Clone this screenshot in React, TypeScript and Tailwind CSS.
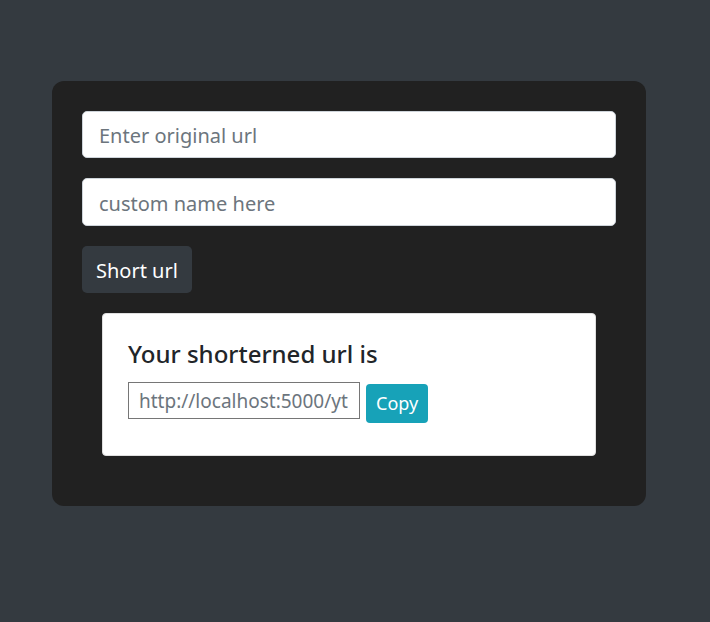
import React from "react";

export default function App() {
  return (
    <div className="min-h-[622px] w-full bg-[#343a40] pt-[81px]" style={{ fontFamily: '"Segoe UI", "Noto Sans", sans-serif' }}>
      <div className="ml-[52px] w-[594px] rounded-[12px] bg-[#212121] px-[30px] pt-[30px] pb-[50px]">
        <input
          className="block h-[47px] w-full rounded-[5px] border border-[#ced4da] bg-white px-4 pt-[2px] text-[20px] text-[#495057] placeholder:text-[#6c757d] outline-none"
          placeholder="Enter original url"
        />
        <input
          className="mt-[20px] block h-[48px] w-full rounded-[5px] border border-[#ced4da] bg-white px-4 pt-[2px] text-[20px] text-[#495057] placeholder:text-[#6c757d] outline-none"
          placeholder="custom name here"
        />
        <button className="mt-[20px] block h-[47px] rounded-[5px] bg-[#343a40] px-[14px] pt-[2px] text-[20px] text-white">
          Short url
        </button>
        <div className="mx-5 mt-[20px] h-[143px] rounded-[4px] border border-[#dfdfdf] bg-white px-[25px] pt-[25px]">
          <h4 className="text-[24px] leading-[29px] font-medium text-[#212529]">Your shorterned url is</h4>
          <div className="mt-[14px] flex items-start gap-[6px]">
            <input
              className="h-[37px] w-[232px] border border-[#767676] bg-white px-[10px] text-[19px] text-[#6c757d] outline-none"
              defaultValue="http://localhost:5000/yt"
            />
            <button className="mt-[2px] h-[39px] rounded-[4px] bg-[#17a2b8] px-[10px] text-[18px] text-white">
              Copy
            </button>
          </div>
        </div>
      </div>
    </div>
  );
}
